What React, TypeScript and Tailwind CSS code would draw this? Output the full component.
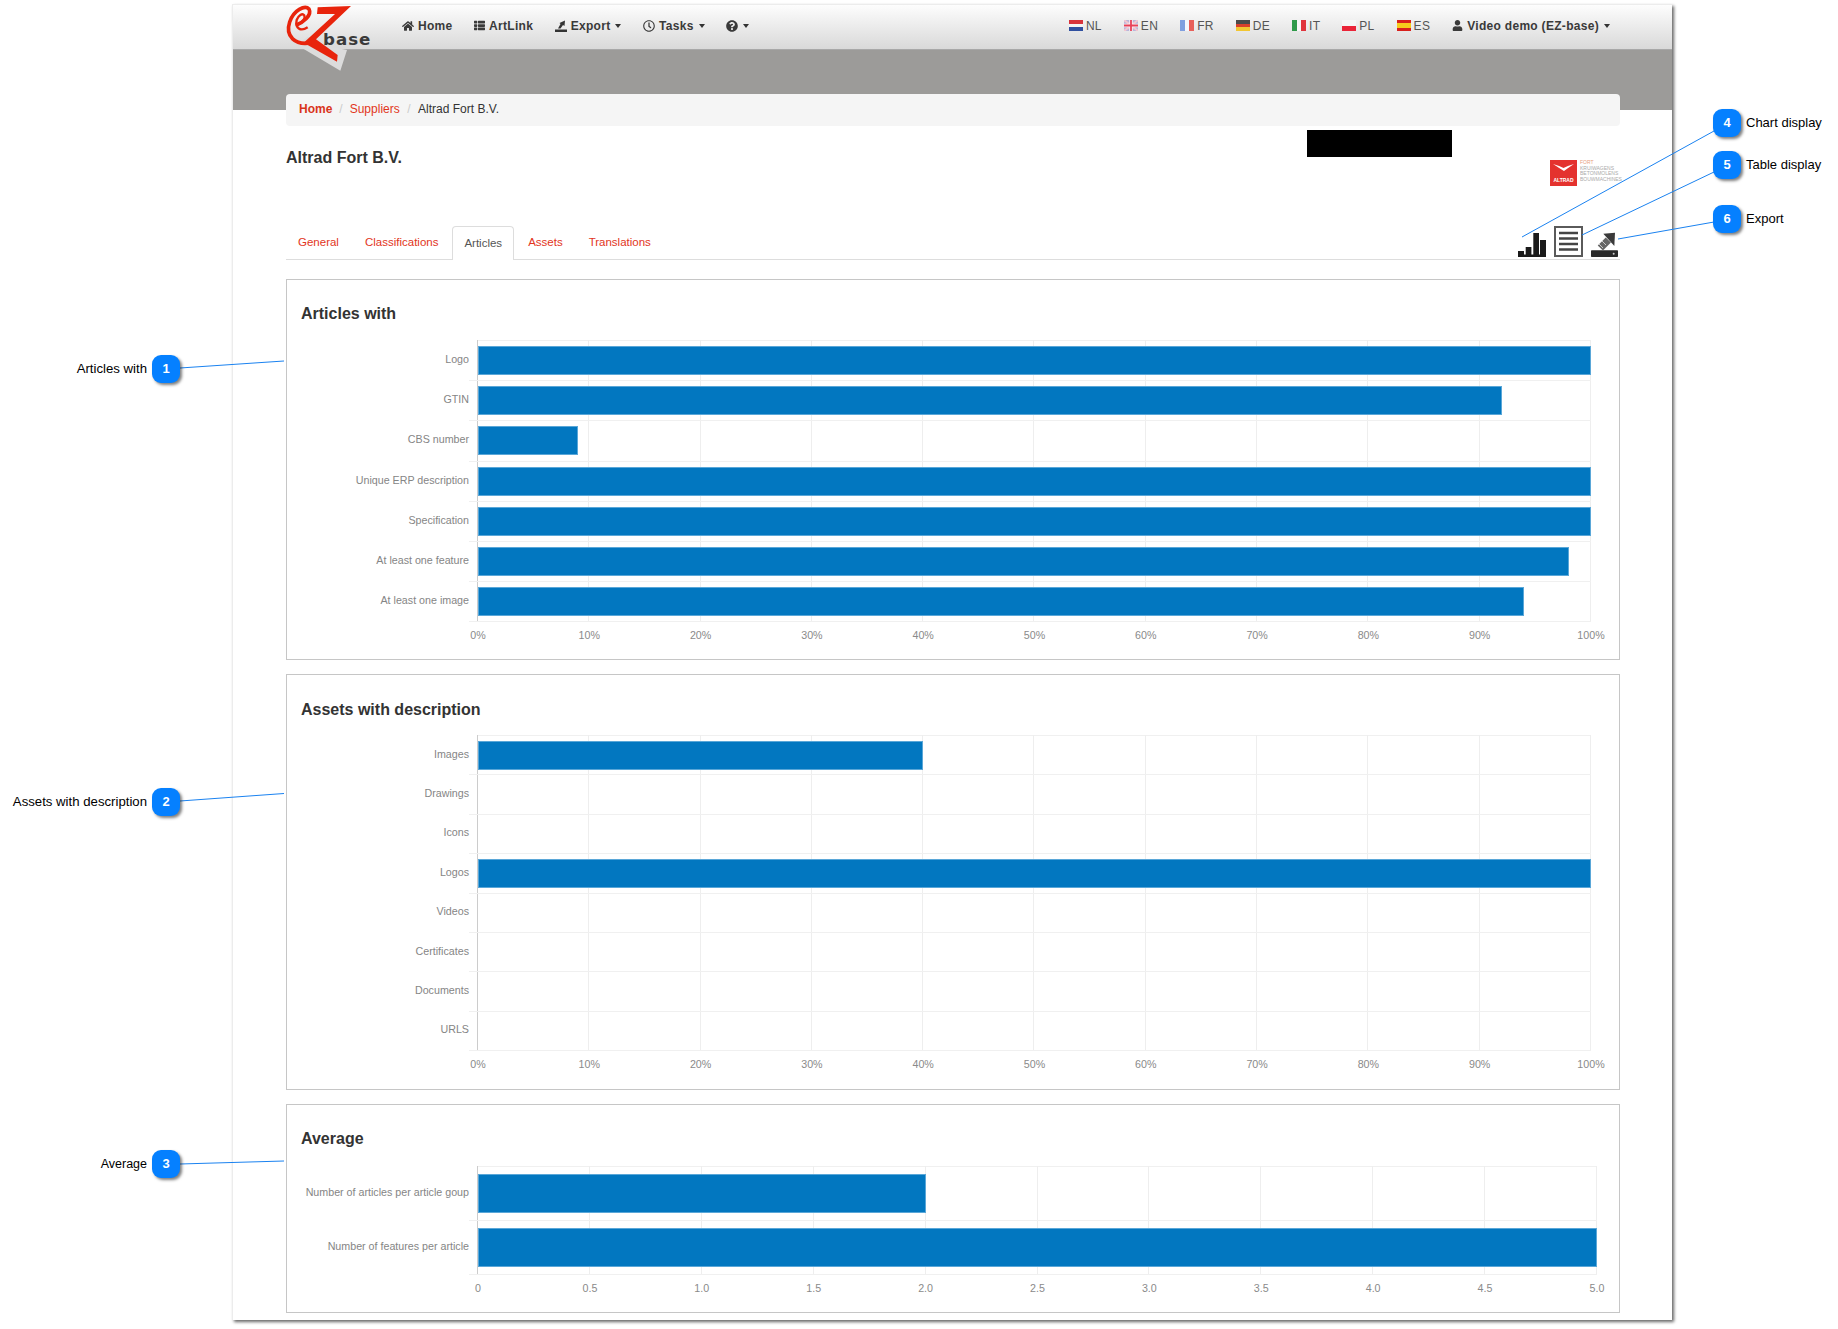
import React from "react";
import { FaHome, FaThList, FaRegClock, FaQuestionCircle, FaUser } from "react-icons/fa";

const Caret = () => <span className="ml-[1px] inline-block h-0 w-0 border-x-[3.5px] border-t-[4px] border-x-transparent border-t-[#333]" />;

const SmallExport = () => (
  <svg viewBox="0 0 12 12" className="h-[12px] w-[12px]" fill="#333">
    <rect x="0" y="9.5" width="12" height="2.5" />
    <path d="M3 8.5 L5.5 4 L4.5 3 L10 0.5 L9.5 6 L8 5 L5.5 8.5Z" />
  </svg>
);

const Logo = () => (
  <svg viewBox="0 0 390 225" className="absolute left-[38px] top-[-5px] h-[75px] w-[130px]">
    <polygon points="78,135 208,212 228,150 150,135 110,110" fill="#dcdcdc" />
    <polygon points="140,22 240,18 135,118 200,165 198,185 98,128 192,42 138,42" fill="#e8240c" />
    <path d="M122 128 C72 138 42 108 56 66 C68 30 102 14 114 27 C124 46 96 68 74 76" fill="none" stroke="#e8240c" strokeWidth="11" />
    <path d="M78 76 C92 68 104 56 100 46 C94 38 82 46 77 60 C72 84 88 96 110 82" fill="none" stroke="#e8240c" strokeWidth="7" />
    <text x="156" y="136" fontSize="50" fontWeight="700" fill="#3a3a3a" letterSpacing="3" fontFamily="'DejaVu Sans', sans-serif">base</text>
  </svg>
);

const Stripes = ({ children, row }: { children: React.ReactNode; row?: boolean }) => (
  <span className={row ? "flex h-[11px] w-[14px] flex-row overflow-hidden" : "flex h-[11px] w-[14px] flex-col overflow-hidden"}>{children}</span>
);

const flags: Record<string, React.ReactNode> = {
  NL: <Stripes><span className="flex-1 bg-[#d8343c]" /><span className="flex-1 bg-[#f4f4f4]" /><span className="flex-1 bg-[#3050a0]" /></Stripes>,
  EN: (
    <svg viewBox="0 0 14 11" className="h-[11px] w-[14px]">
      <rect width="14" height="11" fill="#b9b6da" />
      <path d="M0 0L14 11M14 0L0 11" stroke="#f3c7d0" strokeWidth="2" />
      <path d="M7 0V11M0 5.5H14" stroke="#f7f3f5" strokeWidth="3.5" />
      <path d="M7 0V11M0 5.5H14" stroke="#e8425a" strokeWidth="1.8" />
    </svg>
  ),
  FR: <Stripes row><span className="flex-1 bg-[#7f9fdf]" /><span className="flex-1 bg-[#f4f6fb]" /><span className="flex-1 bg-[#e8605a]" /></Stripes>,
  DE: <Stripes><span className="flex-1 bg-[#4a4a4a]" /><span className="flex-1 bg-[#d8402c]" /><span className="flex-1 bg-[#f2c632]" /></Stripes>,
  IT: <Stripes row><span className="flex-1 bg-[#2f9a4a]" /><span className="flex-1 bg-[#f6f6f6]" /><span className="flex-1 bg-[#e0343c]" /></Stripes>,
  PL: <Stripes><span className="flex-1 bg-[#f6f6f6]" /><span className="flex-1 bg-[#ea2438]" /></Stripes>,
  ES: <Stripes><span className="h-[3px] bg-[#d8201c]" /><span className="flex-1 bg-[#f6cc1c]" /><span className="h-[3px] bg-[#d8201c]" /></Stripes>,
};

const NavItem = ({ icon, label, caret }: { icon: React.ReactNode; label?: string; caret?: boolean }) => (
  <div className="flex items-center gap-[4px] whitespace-nowrap text-[12px] font-bold tracking-[0.3px] text-[#3a3a3a]">
    {icon}
    {label && <span>{label}</span>}
    {caret && <Caret />}
  </div>
);

const Navbar = () => (
  <nav className="relative flex h-[45px] items-center border-b border-[#a8a8a8] bg-gradient-to-b from-[#fdfdfd] to-[#d9d9d9] pb-[3px] pl-[169px] pr-[62px]">
    <Logo />
    <div className="flex items-center gap-[21.5px]">
      <NavItem icon={<FaHome className="h-[12px] w-[12px]" />} label="Home" />
      <NavItem icon={<FaThList className="h-[11px] w-[11px]" />} label="ArtLink" />
      <NavItem icon={<SmallExport />} label="Export" caret />
      <NavItem icon={<FaRegClock className="h-[12px] w-[12px]" />} label="Tasks" caret />
      <NavItem icon={<FaQuestionCircle className="h-[12px] w-[12px]" />} caret />
    </div>
    <div className="ml-auto flex items-center gap-[22px]">
      {Object.keys(flags).map((k) => (
        <div key={k} className="flex items-center gap-[3px] text-[12px] tracking-[0.3px] text-[#555]">
          {flags[k]}
          <span>{k}</span>
        </div>
      ))}
      <NavItem icon={<FaUser className="h-[11px] w-[11px]" />} label="Video demo (EZ-base)" caret />
    </div>
  </nav>
);

const Tab = ({ label, active }: { label: string; active?: boolean }) => (
  <div
    className={
      active
        ? "mr-[2px] -mb-px flex h-[34px] items-center rounded-t-[4px] border border-b-0 border-[#ddd] bg-white px-[11px] text-[#555]"
        : "mr-[2px] flex h-[34px] items-center px-[12px] pt-[2px] text-[#e2351c]"
    }
  >
    {label}
  </div>
);

const Row = ({ label, pct, rowClass, barClass }: { label: string; pct: number; rowClass: string; barClass: string }) => (
  <div className={"relative z-10 flex " + rowClass}>
    <div className="relative flex w-[191px] items-center justify-end pb-[4px] pr-[9px] text-[10.7px] text-[#858585]">
      {label}
      <span className="absolute bottom-0 right-0 h-px w-[9px] bg-[#f0f0f0]" />
    </div>
    <div className="flex flex-1 items-center border-b border-[#f0f0f0]">
      {pct > 0 && <div className={"border border-[#5aa7d8] bg-[#0277c0] " + barClass} style={{ width: pct + "%" }} />}
    </div>
  </div>
);

type ChartProps = {
  title: string;
  boxClass: string;
  titleClass: string;
  widthClass: string;
  rowClass: string;
  barClass: string;
  rows: [string, number][];
  ticks: string[];
};

const ChartBox = ({ title, boxClass, titleClass, widthClass, rowClass, barClass, rows, ticks }: ChartProps) => (
  <section className={"border border-[#c6c6c6] bg-white " + boxClass}>
    <h3 className={"ml-[14px] h-[20px] text-[16px] font-bold leading-[20px] text-[#333] " + titleClass}>{title}</h3>
    <div className={widthClass}>
      <div className="relative">
        <div className="absolute inset-y-0 left-[190px] right-0 flex border-l border-[#ccc]">
          {ticks.slice(1).map((t) => (
            <div key={t} className="flex-1 border-r border-[#eeeeee]" />
          ))}
        </div>
        <div className="ml-[191px] h-0 border-t border-[#f0f0f0]" />
        {rows.map(([l, p]) => (
          <Row key={l} label={l} pct={p} rowClass={rowClass} barClass={barClass} />
        ))}
      </div>
      <div className="ml-[191px] mt-[6px] flex h-[14px] justify-between text-[10.7px] leading-[14px] text-[#8a8a8a]">
        {ticks.map((t) => (
          <div key={t} className="flex w-0 justify-center whitespace-nowrap">{t}</div>
        ))}
      </div>
    </div>
  </section>
);

const pctTicks = ["0%", "10%", "20%", "30%", "40%", "50%", "60%", "70%", "80%", "90%", "100%"];

const ChartIcon = () => (
  <svg viewBox="0 0 28 24" className="h-[24px] w-[28px]" fill="#1a1a1a">
    <rect x="0" y="21.5" width="28" height="2.5" />
    <rect x="0" y="18" width="6" height="6" />
    <rect x="7.7" y="14" width="5.7" height="10" />
    <rect x="15.3" y="0" width="5.7" height="24" />
    <rect x="22" y="7" width="6" height="17" />
  </svg>
);

const TableIcon = () => (
  <svg viewBox="0 0 29 31" className="h-[31px] w-[29px]">
    <rect x="1" y="1" width="27" height="29" fill="#fff" stroke="#5a5a5a" strokeWidth="2" />
    <path d="M5 7H24M5 12.5H24M5 18H24M5 23.5H24" stroke="#444" strokeWidth="2.6" />
  </svg>
);

const ExportIcon = () => (
  <svg viewBox="0 0 81 75" className="h-[25px] w-[27px]">
    <rect x="0" y="55" width="81" height="20" rx="2" fill="#2a2a2a" />
    <circle cx="68" cy="65" r="3" fill="#ccc" />
    <path d="M52 24 L28 48" stroke="#666" strokeWidth="22" />
    <path d="M24 36L36 48M33 27L45 39" stroke="#ddd" strokeWidth="2.5" />
    <polygon points="37,5 72,2 70,42" fill="#3a3a3a" />
  </svg>
);

const AltradLogo = () => (
  <div className="ml-[98px] mt-[34px] flex h-[26px] w-[70px] gap-[3px]">
    <div className="flex h-[26px] w-[27px] flex-col items-center bg-[#e4322e]">
      <svg viewBox="0 0 27 12" className="h-[12px] w-[27px]"><path d="M3 4 Q10 6 13.5 8 Q17 6 24 4 Q18 8 14 11 Q9 8 3 4Z" fill="#fff" /></svg>
      <span className="mt-[5px] text-[5px] font-bold leading-[6px] text-white">ALTRAD</span>
    </div>
    <div className="flex flex-col text-[5px] leading-[5.5px] text-[#aaa]">
      <span className="text-[#e8a080]">FORT</span>
      <span>KRUIWAGENS</span>
      <span>BETONMOLENS</span>
      <span>BOUWMACHINES</span>
    </div>
  </div>
);

const Badge = ({ n, className }: { n: number; className: string }) => (
  <div className={"absolute flex h-[28px] w-[28px] items-center justify-center rounded-[9px] bg-[#0580ff] text-[13px] font-bold text-white shadow-[2px_2px_3px_rgba(0,0,0,0.5)] " + className}>{n}</div>
);

const Callouts = () => (
  <>
    <svg className="absolute left-0 top-0 h-[1329px] w-[1838px]" viewBox="0 0 1838 1329" fill="none" stroke="#1a82f0" strokeWidth="1">
      <line x1="180" y1="368" x2="284" y2="361" />
      <line x1="180" y1="801" x2="284" y2="793.5" />
      <line x1="180" y1="1164" x2="284" y2="1161" />
      <line x1="1714" y1="131" x2="1522" y2="237" />
      <line x1="1714" y1="172" x2="1582" y2="235" />
      <line x1="1714" y1="222" x2="1618" y2="239" />
    </svg>
    <Badge n={1} className="left-[152px] top-[355px]" />
    <Badge n={2} className="left-[152px] top-[788px]" />
    <Badge n={3} className="left-[152px] top-[1150px]" />
    <Badge n={4} className="left-[1713px] top-[109px]" />
    <Badge n={5} className="left-[1713px] top-[151px]" />
    <Badge n={6} className="left-[1713px] top-[205px]" />
    <span className="absolute right-[1691px] top-[361px] whitespace-nowrap text-[13.2px] leading-[16px] text-black">Articles with</span>
    <span className="absolute right-[1691px] top-[794px] whitespace-nowrap text-[13.2px] leading-[16px] text-black">Assets with description</span>
    <span className="absolute right-[1691px] top-[1156px] whitespace-nowrap text-[12.5px] leading-[16px] text-black">Average</span>
    <span className="absolute left-[1746px] top-[115px] whitespace-nowrap text-[13px] leading-[16px] text-black">Chart display</span>
    <span className="absolute left-[1746px] top-[157px] whitespace-nowrap text-[13px] leading-[16px] text-black">Table display</span>
    <span className="absolute left-[1746px] top-[211px] whitespace-nowrap text-[13px] leading-[16px] text-black">Export</span>
  </>
);

export default function App() {
  return (
    <div className="relative h-[1329px] w-[1838px] overflow-hidden bg-white pt-[4px] font-['Liberation_Sans',Arial,sans-serif]">
      <div className="ml-[232px] h-[1316px] w-[1440px] border-l border-t border-[#ececec] bg-white shadow-[2px_2px_3px_rgba(0,0,0,0.6)]">
        <Navbar />
        <div className="h-[60px] bg-[#9c9b99]" />
        <div className="ml-[53px] mr-[52px]">
          <div className="relative -mt-[16px] flex h-[32px] items-center rounded-[4px] bg-[#f5f5f5] px-[13px] pb-[2px] text-[12px]">
            <span className="font-bold text-[#d9341c]">Home</span>
            <span className="mx-[7px] text-[#ccc]">/</span>
            <span className="text-[#e2351c]">Suppliers</span>
            <span className="mx-[7.5px] text-[#ccc]">/</span>
            <span className="text-[#333]">Altrad Fort B.V.</span>
          </div>
          <div className="flex h-[100px] items-start">
            <h1 className="mt-[21px] flex-1 text-[16px] font-bold leading-[22px] text-[#333]">Altrad Fort B.V.</h1>
            <div className="mt-[4px] h-[27px] w-[145px] bg-black" />
            <AltradLogo />
          </div>
          <div className="flex h-[34px] items-end border-b border-[#ddd] text-[11.5px]">
            <Tab label="General" />
            <Tab label="Classifications" />
            <Tab label="Articles" active />
            <Tab label="Assets" />
            <Tab label="Translations" />
            <div className="mb-[2px] ml-auto flex items-end gap-[8px] pr-[2px]">
              <ChartIcon />
              <TableIcon />
              <ExportIcon />
            </div>
          </div>
          <div className="mt-[19px] flex flex-col gap-[14px]">
            <ChartBox
              title="Articles with"
              boxClass="h-[381px]"
              titleClass="mt-[24px] mb-[16px]"
              widthClass="w-[1304px]"
              rowClass="h-[40.2px]"
              barClass="h-[29px]"
              rows={[["Logo", 100], ["GTIN", 92], ["CBS number", 9], ["Unique ERP description", 100], ["Specification", 100], ["At least one feature", 98], ["At least one image", 94]]}
              ticks={pctTicks}
            />
            <ChartBox
              title="Assets with description"
              boxClass="h-[416px]"
              titleClass="mt-[25px] mb-[15px]"
              widthClass="w-[1304px]"
              rowClass="h-[39.4px]"
              barClass="h-[29px]"
              rows={[["Images", 40], ["Drawings", 0], ["Icons", 0], ["Logos", 100], ["Videos", 0], ["Certificates", 0], ["Documents", 0], ["URLS", 0]]}
              ticks={pctTicks}
            />
            <ChartBox
              title="Average"
              boxClass="h-[209px]"
              titleClass="mt-[24px] mb-[17px]"
              widthClass="w-[1310px]"
              rowClass="h-[54px]"
              barClass="h-[39px]"
              rows={[["Number of articles per article goup", 40], ["Number of features per article", 100]]}
              ticks={["0", "0.5", "1.0", "1.5", "2.0", "2.5", "3.0", "3.5", "4.0", "4.5", "5.0"]}
            />
          </div>
        </div>
      </div>
      <Callouts />
    </div>
  );
}
